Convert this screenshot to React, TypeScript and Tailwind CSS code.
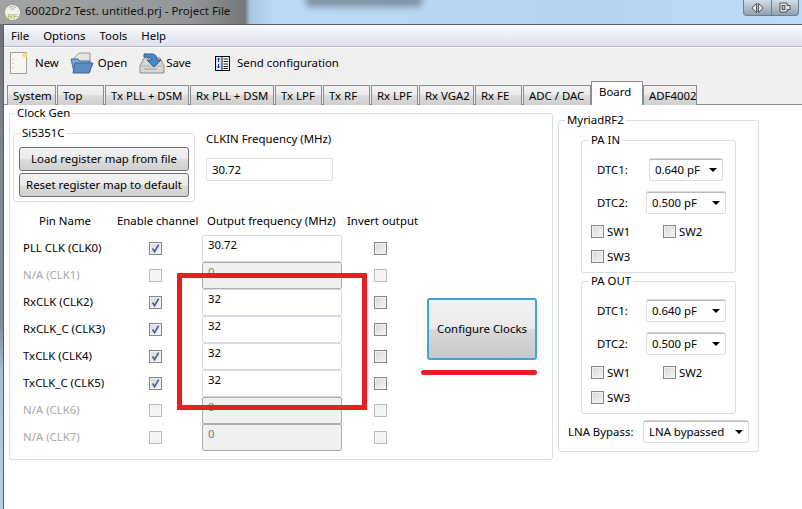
const font = "font-['Noto_Sans','Open_Sans',sans-serif]";

function Check({ checked = false, disabled = false }: { checked?: boolean; disabled?: boolean }) {
  return (
    <span className={`flex h-[13px] w-[13px] items-center justify-center border ${disabled ? "border-[#bdbdbd] bg-[#f4f4f4]" : "border-[#858585] bg-[linear-gradient(135deg,#d6d6d6,#f6f6f6)] shadow-[inset_0_0_0_1px_#f2f2f2]"}`}>
      {checked && (
        <svg width="11" height="11" viewBox="0 0 11 11">
          <path d="M2.5 5.5 L4.6 8.6 L8.6 1.6" fill="none" stroke="#4a5fa0" strokeWidth="1.7" />
        </svg>
      )}
    </span>
  );
}

function Group({ title, titleX, className, children }: { title: string; titleX: string; className: string; children?: React.ReactNode }) {
  return (
    <div className={`relative rounded-[3px] border border-[#d5dfe5] ${className}`}>
      <span className={`absolute top-[-9px] bg-white px-[2px] text-[11.4px] leading-4 text-black ${titleX}`}>{title}</span>
      {children}
    </div>
  );
}

function Select({ value, w, className = "" }: { value: string; w: string; className?: string }) {
  return (
    <div className={`flex h-[23px] items-center justify-between rounded-[2px] border border-[#d9dce4] bg-white pl-[5px] pr-[5px] text-[11.4px] text-black shadow-[inset_0_1px_0_#b9b9b9] ${w} ${className}`}>
      <span>{value}</span>
      <span className="h-0 w-0 border-x-[4px] border-t-[4px] border-x-transparent border-t-black" />
    </div>
  );
}

function PaBox({ title, className, labelW, selectW }: { title: string; className: string; labelW: string; selectW: string }) {
  return (
    <Group title={title} titleX="left-[7px]" className={`h-[133px] w-[155px] ${className}`}>
      <div className="flex items-center pl-[15px] pt-[17px]">
        <span className={`text-[11.4px] ${labelW}`}>DTC1:</span>
        <Select value="0.640 pF" w={selectW} />
      </div>
      <div className="mt-[10px] flex items-center pl-[15px]">
        <span className="w-[49px] text-[11.4px]">DTC2:</span>
        <Select value="0.500 pF" w="w-[80px]" />
      </div>
      <div className="mt-[9px] flex items-center pl-[9px]">
        <div className="flex w-[72px] items-center gap-[3px] text-[11.4px]"><Check /><span>SW1</span></div>
        <div className="flex items-center gap-[3px] text-[11.4px]"><Check /><span>SW2</span></div>
      </div>
      <div className="mt-[8px] flex items-center gap-[3px] pl-[9px] text-[11.4px]"><Check /><span>SW3</span></div>
    </Group>
  );
}

const rows = [
  { pin: "PLL CLK (CLK0)", on: true, val: "30.72", en: true },
  { pin: "N/A (CLK1)", on: false, val: "0", en: false },
  { pin: "RxCLK (CLK2)", on: true, val: "32", en: true },
  { pin: "RxCLK_C (CLK3)", on: true, val: "32", en: true },
  { pin: "TxCLK (CLK4)", on: true, val: "32", en: true },
  { pin: "TxCLK_C (CLK5)", on: true, val: "32", en: true },
  { pin: "N/A (CLK6)", on: false, val: "0", en: false },
  { pin: "N/A (CLK7)", on: false, val: "0", en: false },
];

const tabs: [string, string, string][] = [
  ["System", "w-[49px]", "mr-[1px]"],
  ["Top", "w-[47px]", "mr-[1px]"],
  ["Tx PLL + DSM", "w-[84px]", "mr-[1px]"],
  ["Rx PLL + DSM", "w-[84px]", "mr-[1px]"],
  ["Tx LPF", "w-[47px]", "mr-[1px]"],
  ["Tx RF", "w-[47px]", "mr-[1px]"],
  ["Rx LPF", "w-[47px]", "mr-[1px]"],
  ["Rx VGA2", "w-[55px]", "mr-[1px]"],
  ["Rx FE", "w-[47px]", "mr-[1px]"],
  ["ADC / DAC", "w-[68px]", ""],
];

function Tab({ label, w, m }: { label: string; w: string; m: string }) {
  return (
    <div className={`flex h-[20px] items-center border border-b-0 border-[#898c95] bg-[linear-gradient(#f2f2f2_0%,#ebebeb_50%,#dddddd_50%,#cfcfcf_100%)] pl-[5px] text-[11.4px] leading-4 text-black ${w} ${m}`}>
      {label}
    </div>
  );
}

export default function App() {
  return (
    <div className={`flex h-[509px] w-[802px] flex-col overflow-hidden bg-white ${font} text-[11.4px] text-black`}>
      {/* Title bar */}
      <div className="relative flex h-[24px] shrink-0 items-start overflow-hidden bg-[linear-gradient(90deg,#a2a4a4_0px,#94979a_190px,#75787a_245px,#a9c6e0_250px,#bad9f6_275px,#b4d4f0_600px,#bcdcfa_802px)]">
        <div className="absolute left-[305px] top-[-5px] h-[12px] w-[118px] rounded-full bg-[#5c6670] opacity-60 blur-[3px]" />
        <svg className="relative ml-[4px] mt-[3px]" width="17" height="18" viewBox="0 0 17 18">
          <circle cx="8.5" cy="9.5" r="7.5" fill="#f4f4e6" />
          <path d="M5 5a5 5 0 0 1 7 0M6.5 6.6a3 3 0 0 1 4 0" fill="none" stroke="#a8a8a0" strokeWidth="1" />
          <text x="3.5" y="16" fontSize="7.5" fontWeight="700" fill="#b5c25a" fontFamily="Liberation Sans">RF</text>
        </svg>
        <span className="relative ml-[4px] mt-[1px] text-[11.5px] leading-[20px] text-[#111]">6002Dr2 Test. untitled.prj - Project File</span>
        <div className="relative ml-auto mr-[3px] flex h-[16px] w-[56px] overflow-hidden rounded-b-[4px] border border-t-0 border-[#6f7e8e] bg-[linear-gradient(#d4dde7,#8fa0b2)]">
          <div className="flex flex-1 items-center justify-center border-r border-[#6f7e8e]">
            <svg width="13" height="10" viewBox="0 0 13 10"><path d="M5.5 0.5V9.5L0.8 5ZM7.5 0.5V9.5L12.2 5Z" fill="#e4e8ec" stroke="#333" strokeWidth="0.8" /></svg>
          </div>
          <div className="flex flex-1 items-center justify-center">
            <svg width="12" height="11" viewBox="0 0 12 11"><path d="M1 1H8V3.5H11V7.5H8V10H1ZM3 3.5H6V7.5H3Z" fill="#e4e8ec" stroke="#333" strokeWidth="0.8" fillRule="evenodd" /></svg>
          </div>
        </div>
      </div>

      {/* Window */}
      <div className="flex min-h-0 flex-1">
        <div className="w-[3px] shrink-0 bg-[linear-gradient(#6d7076_0%,#808890_30%,#7f8c9c_62%,#a6bfd8_72%,#b6cfe6_100%)]" />
        <div className="flex min-w-0 flex-1 flex-col border-l border-t border-[#55606c]">
          {/* Menu */}
          <div className="flex h-[21px] shrink-0 items-center gap-[14px] bg-[linear-gradient(#fbfcfe_0%,#eef1f7_35%,#dde2ef_100%)] pl-[7px] text-[11.4px]">
            <span>File</span><span>Options</span><span>Tools</span><span>Help</span>
          </div>
          <div className="h-[1px] shrink-0 bg-[#b5b9c4]" />
          <div className="h-[1px] shrink-0 bg-white" />
          {/* Toolbar + tabs */}
          <div className="flex shrink-0 flex-col bg-[#f0f0f0]">
            <div className="flex h-[34px] items-center pb-[4px] pl-[6px] text-[11.4px]">
              <svg width="18" height="24" viewBox="0 0 18 24">
                <rect x="0.5" y="1.5" width="16" height="21" fill="#f7f7f0" stroke="#a0a0a0" />
                <circle cx="15" cy="4" r="2.5" fill="#f6e25a" />
                <path d="M3 8v.8M3 12v.8M3 16v.8" stroke="#999" />
              </svg>
              <span className="ml-[7px]">New</span>
              <svg className="ml-[11px]" width="24" height="22" viewBox="0 0 24 22">
                <path d="M4 6L9 1H20V12H4Z" fill="#e4e4e4" stroke="#999" />
                <path d="M1 7H8L10 9H20V20H4Z" fill="#7ea6d6" stroke="#4a6f9f" />
                <path d="M5 11H23L19 21H3Z" fill="#5c8cc8" stroke="#3f6698" />
              </svg>
              <span className="ml-[4px]">Open</span>
              <svg className="ml-[12px]" width="26" height="24" viewBox="0 0 26 24">
                <path d="M1 15L5 7H21L25 15V22H1Z" fill="#d8d8d2" stroke="#8c8c88" />
                <path d="M3 15H23" stroke="#aaa" />
                <path d="M5 18H18" stroke="#999" />
                <path d="M5 3H13C17 3 18 6 18 9H22L15 16L8 9H13C13 7 11 6 5 6Z" fill="#4a88c8" stroke="#285a90" />
              </svg>
              <span className="ml-[1px]">Save</span>
              <svg className="ml-[24px]" width="15" height="15" viewBox="0 0 15 15">
                <rect x="0.5" y="0.5" width="14" height="14" fill="#fff" stroke="#000" />
                <rect x="1" y="1" width="5" height="13" fill="#dfe8ff" />
                <path d="M7 .5V14.5" stroke="#000" />
                <path d="M2 3.5L3.5 2L5 3.5M3.5 2V6M2 10.5L3.5 12L5 10.5M3.5 8V12" stroke="#1030d0" fill="none" />
                <path d="M8.5 3H13M8.5 5.5H13M8.5 8H13M8.5 10.5H13M8.5 12.5H13" stroke="#222" />
              </svg>
              <span className="ml-[7px]">Send configuration</span>
            </div>
            <div className="relative z-10 mb-[-1px] flex h-[23px] items-end pl-[3px]">
              {tabs.map(([label, w, m]) => <Tab key={label} label={label} w={w} m={m} />)}
              <div className="flex h-[24px] w-[52px] items-start border border-b-0 border-[#898c95] bg-white pl-[7px] pt-[2px] text-[11.4px] leading-4">Board</div>
              <Tab label="ADF4002" w="w-[54px]" m="" />
              <div className="flex-1" />
            </div>
          </div>
          <div className="h-[1px] shrink-0 bg-[#898c95]" />

          {/* Page */}
          <div className="relative flex min-h-0 flex-1 items-start bg-white pl-[5px] pt-[8px]">
            <Group title="Clock Gen" titleX="left-[5px]" className="h-[347px] w-[544px] shrink-0">
              <div className="flex pl-[3px] pt-[19px]">
                <Group title="Si5351C" titleX="left-[6px]" className="h-[69px] w-[182px] shrink-0">
                  <div className="flex flex-col gap-[2px] px-[5px] pt-[13px]">
                    {["Load register map from file", "Reset register map to default"].map((t) => (
                      <div key={t} className="flex h-[24px] items-center justify-center rounded-[3px] border border-[#707070] bg-[linear-gradient(#f2f2f2_0%,#ebebeb_50%,#dddddd_50%,#cfcfcf_100%)] text-[11.4px]">{t}</div>
                    ))}
                  </div>
                </Group>
                <div className="ml-[11px] mt-[-2px]">
                  <div className="text-[11.4px] leading-4">CLKIN Frequency (MHz)</div>
                  <div className="mt-[11px] flex h-[23px] w-[127px] items-center rounded-[2px] border border-[#dbdfe6] pl-[5px] text-[11.4px]">30.72</div>
                </div>
              </div>

              <div className="mt-[11px] grid grid-cols-[126px_53px_140px_78px] items-center pl-[13px]">
                <div className="h-[22px] pl-[16px] text-[11.4px] leading-4">Pin Name</div>
                <div className="ml-[-32px] h-[22px] whitespace-nowrap text-[11.4px] leading-4">Enable channel</div>
                <div className="h-[22px] whitespace-nowrap pl-[5px] text-[11.4px] leading-4">Output frequency (MHz)</div>
                <div className="h-[22px] whitespace-nowrap pl-[5px] text-[11.4px] leading-4">Invert output</div>
              </div>
              <div className="flex">
                <div className="relative flex flex-col pl-[13px]">
                  {rows.map((r) => (
                    <div key={r.pin} className="grid h-[27px] grid-cols-[126px_53px_140px_78px] items-center">
                      <span className={`pb-[2px] text-[11.4px] ${r.en ? "text-black" : "text-[#a8a8a8]"}`}>{r.pin}</span>
                      <span className="flex pl-0"><Check checked={r.on} disabled={!r.en} /></span>
                      <div className={`h-[27px] rounded-[2px] border pl-[5px] pt-[1px] text-[11.4px] leading-4 ${r.en ? "border-[#d6d9e2] bg-white text-black" : "border-[#adadad] bg-[#f0f0f0] text-[#808080]"}`}>{r.val}</div>
                      <span className="flex pl-[32px]"><Check disabled={!r.en} /></span>
                    </div>
                  ))}
                </div>
                <div className="ml-[7px] mt-[63px]">
                  <div className="flex h-[62px] w-[110px] items-center justify-center rounded-[3px] border-2 border-[#3ba7d8] bg-[linear-gradient(#f2f2f2_0%,#eaeaea_50%,#d9d9d9_50%,#c8c8c8_100%)] text-[11.4px]">Configure Clocks</div>
                  <div className="ml-[-6px] mt-[10px] h-[5px] w-[116px] rounded-full bg-[#ed1c24]" />
                </div>
              </div>
            </Group>
            <Group title="MyriadRF2" titleX="left-[6px]" className="ml-[5px] mt-[7px] h-[332px] w-[201px] shrink-0">
              <div className="flex flex-col items-start pl-[22px] pt-[19px]">
                <PaBox title="PA IN" className="" labelW="w-[52px]" selectW="w-[74px]" />
                <PaBox title="PA OUT" className="mt-[8px]" labelW="w-[49px]" selectW="w-[80px]" />
                <div className="ml-[-13px] mt-[6px] flex items-center">
                  <span className="w-[75px] text-[11.4px]">LNA Bypass:</span>
                  <Select value="LNA bypassed" w="w-[106px]" />
                </div>
              </div>
            </Group>
            {/* Red annotation rectangle */}
            <div className="pointer-events-none absolute left-[173px] top-[168px] h-[137px] w-[190px] border-[5px] border-[#ed1c24]" />
          </div>
        </div>
      </div>
    </div>
  );
}
